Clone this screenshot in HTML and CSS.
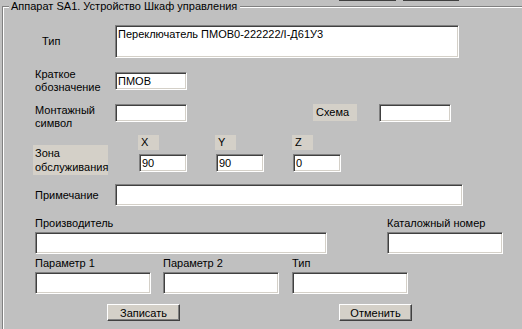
FILE: index.html
```html
<!DOCTYPE html>
<html lang="ru">
<head>
  <meta charset="UTF-8" />
  <title>Аппарат SA1</title>
  <link rel="stylesheet" href="styles.css">
</head>
<body>
  <div class="topbar">
    <span class="stub stub-first"></span>
    <span class="stub stub-second"></span>
  </div>

  <div class="panel">
    <div class="legend">Аппарат SA1. Устройство Шкаф управления</div>

    <div class="row row-type">
      <label class="lbl lbl-type">Тип</label>
      <textarea class="field field-type">Переключатель ПМОВ0-222222/I-Д61У3</textarea>
    </div>

    <div class="row row-short">
      <label class="lbl">Краткое<br>обозначение</label>
      <input class="field field-small" type="text" value="ПМОВ" />
    </div>

    <div class="row row-mount">
      <label class="lbl">Монтажный<br>символ</label>
      <input class="field field-small" type="text" value="" />
      <span class="tag tag-scheme">Схема</span>
      <input class="field field-small" type="text" value="" />
    </div>

    <div class="row row-zone">
      <span class="tag tag-zone">Зона<br>обслуживания</span>
      <div class="coord coord-x">
        <span class="tag tag-axis">X</span>
        <input class="field field-coord" type="text" value="90" />
      </div>
      <div class="coord">
        <span class="tag tag-axis">Y</span>
        <input class="field field-coord" type="text" value="90" />
      </div>
      <div class="coord">
        <span class="tag tag-axis">Z</span>
        <input class="field field-coord" type="text" value="0" />
      </div>
    </div>

    <div class="row row-note">
      <label class="lbl">Примечание</label>
      <input class="field field-note" type="text" value="" />
    </div>

    <div class="row row-maker">
      <div class="stack">
        <label class="cap">Производитель</label>
        <input class="field field-maker" type="text" value="" />
      </div>
      <div class="stack stack-catalog">
        <label class="cap">Каталожный номер</label>
        <input class="field field-wide" type="text" value="" />
      </div>
    </div>

    <div class="row row-params">
      <div class="stack">
        <label class="cap">Параметр 1</label>
        <input class="field field-wide" type="text" value="" />
      </div>
      <div class="stack stack-p2">
        <label class="cap">Параметр 2</label>
        <input class="field field-wide" type="text" value="" />
      </div>
      <div class="stack stack-p3">
        <label class="cap">Тип</label>
        <input class="field field-wide" type="text" value="" />
      </div>
    </div>

    <div class="row row-buttons">
      <button class="btn btn-save" type="button">Записать</button>
      <button class="btn btn-cancel" type="button">Отменить</button>
    </div>
  </div>
</body>
</html>
```

FILE: styles.css
```css
:root {
  --face: #c0c0c0;
  --tag-face: #d4d0c8;
  --shadow: #808080;
  --dark: #404040;
  --light: #ffffff;
}

body {
  margin: 0;
  width: 522px;
  height: 329px;
  overflow: hidden;
  background: var(--face);
  font-family: 'Liberation Sans', Arial, sans-serif;
  font-size: 11px;
  color: #000;
}

.topbar {
  display: flex;
  height: 6px;
}

.stub {
  height: 1px;
  background: var(--dark);
}

.stub-first {
  margin-left: 339px;
  width: 57px;
}

.stub-second {
  margin-left: 7px;
  width: 56px;
}

/* group box: right and bottom edges lie outside the window */
.panel {
  box-sizing: border-box;
  margin-left: 2px;
  width: 520px;
  height: 323px;
  border-top: 1px solid var(--shadow);
  border-left: 1px solid var(--shadow);
  box-shadow: inset 1px 1px var(--light);
}

.legend {
  width: fit-content;
  margin-top: -7px;
  margin-left: 6px;
  padding: 0 3px 0 2px;
  line-height: 13px;
  background: var(--face);
}

.row {
  display: flex;
}

.lbl {
  width: 80px;
  margin-left: 32px;
  line-height: 13px;
}

.field {
  box-sizing: border-box;
  margin: 0;
  padding: 0 2px;
  font: inherit;
  color: #000;
  background: #fff;
  border-top: 1px solid var(--shadow);
  border-left: 1px solid var(--shadow);
  border-right: 1px solid var(--light);
  border-bottom: 1px solid var(--light);
  box-shadow: inset 1px 1px var(--dark), inset -1px -1px var(--tag-face);
  outline: none;
}

/* Тип */
.row-type {
  margin-top: 12px;
  align-items: center;
}

.lbl-type {
  padding-left: 7px;
  width: 73px;
}

.field-type {
  width: 344px;
  height: 33px;
  padding-top: 2px;
  line-height: 13px;
  resize: none;
  overflow: hidden;
}

.field-small {
  width: 72px;
  height: 18px;
}

.row-short {
  margin-top: 10px;
  align-items: center;
}

.row-mount {
  margin-top: 10px;
  align-items: flex-start;
}

.tag {
  background: var(--tag-face);
}

.tag-scheme {
  margin-left: 126px;
  width: 41px;
  height: 17px;
  padding-left: 3px;
  line-height: 17px;
  margin-right: 22px;
}

/* Зона обслуживания */
.row-zone {
  margin-top: 5px;
  align-items: flex-start;
}

.tag-zone {
  box-sizing: border-box;
  margin-top: 10px;
  margin-left: 30px;
  width: 75px;
  height: 30px;
  padding-left: 2px;
  padding-top: 1px;
  line-height: 14px;
}

.coord {
  display: flex;
  flex-direction: column;
  margin-left: 29px;
  width: 48px;
}

.coord-x {
  margin-left: 31px;
}

.tag-axis {
  width: 18px;
  height: 15px;
  margin-left: -1px;
  padding-left: 3px;
  line-height: 15px;
}

.field-coord {
  width: 48px;
  height: 18px;
  margin-top: 4px;
}

/* Примечание */
.row-note {
  margin-top: 9px;
  align-items: center;
}

.field-note {
  width: 348px;
  height: 22px;
}

/* Нижние поля */
.stack {
  display: flex;
  flex-direction: column;
  margin-left: 32px;
}

.cap {
  line-height: 13px;
  margin-bottom: 2px;
}

.row-maker {
  margin-top: 11px;
}

.field-maker {
  width: 292px;
  height: 22px;
}

.field-wide {
  width: 116px;
  height: 22px;
}

.stack-catalog {
  margin-left: 60px;
}

.row-params {
  margin-top: 3px;
}

.stack-p2 {
  margin-left: 12px;
}

.stack-p3 {
  margin-left: 13px;
}

/* Кнопки */
.row-buttons {
  margin-top: 10px;
}

.btn {
  box-sizing: border-box;
  width: 73px;
  height: 17px;
  padding: 0;
  font: inherit;
  color: #000;
  background: var(--tag-face);
  border-top: 1px solid var(--light);
  border-left: 1px solid var(--light);
  border-right: 1px solid var(--dark);
  border-bottom: 1px solid var(--dark);
  box-shadow: inset -1px -1px var(--shadow);
}

.btn-save {
  margin-left: 104px;
}

.btn-cancel {
  margin-left: 159px;
}
```
